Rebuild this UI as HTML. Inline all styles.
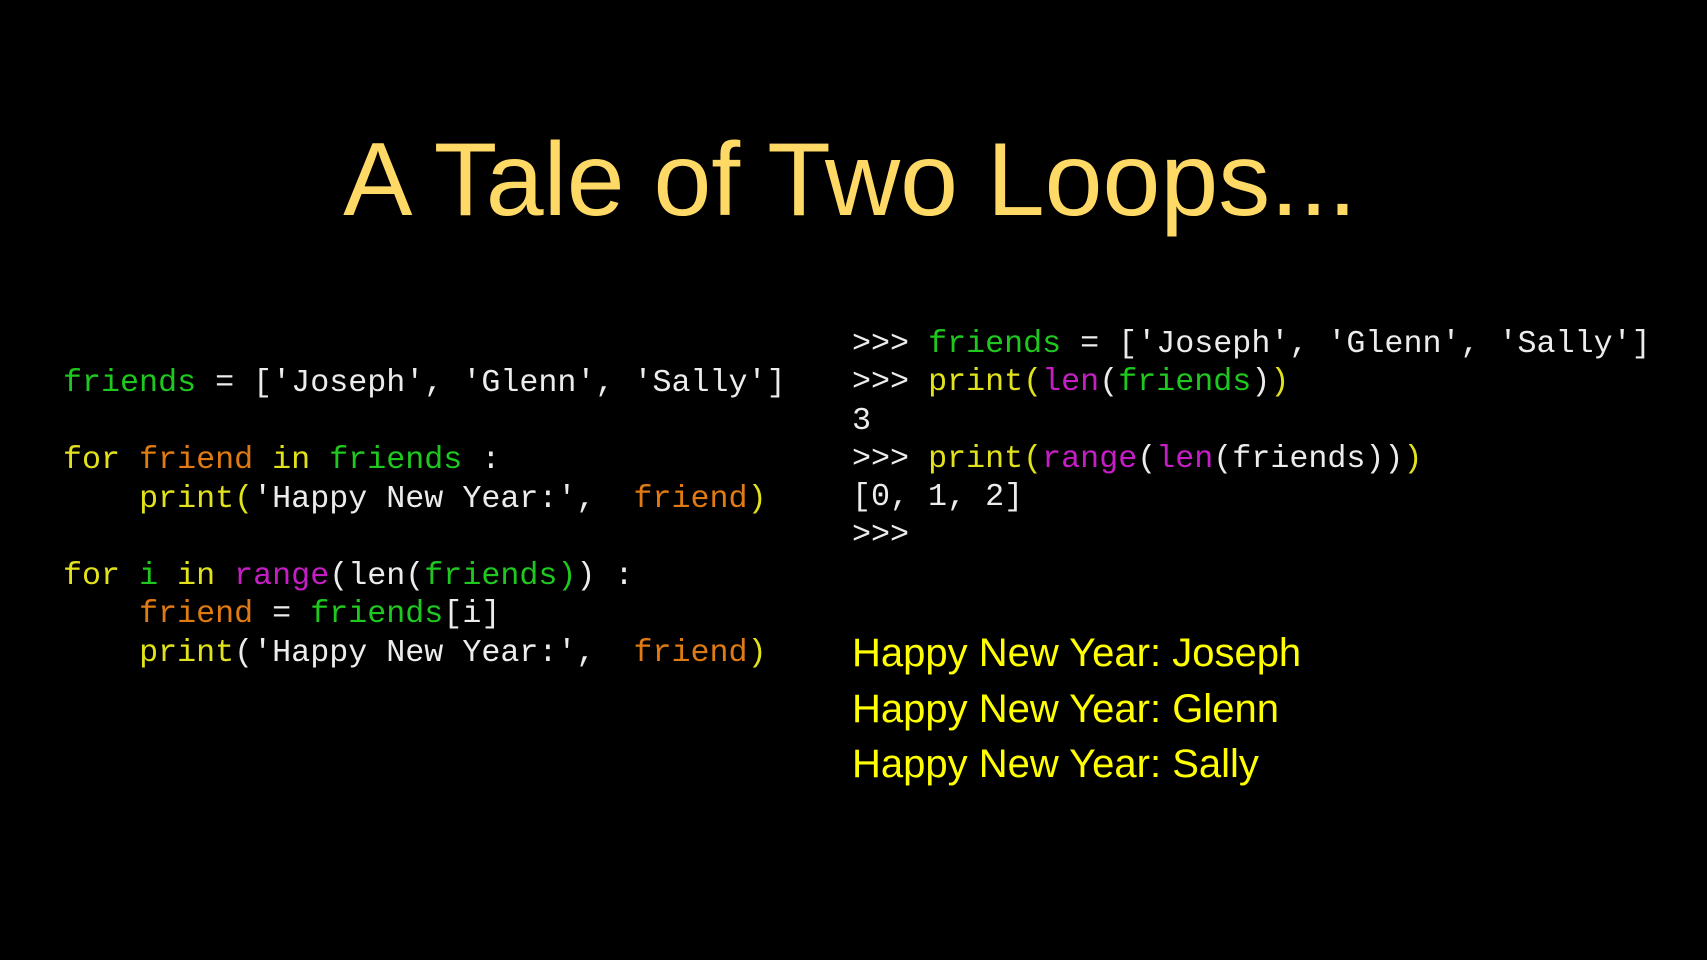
<!DOCTYPE html>
<html><head><meta charset="utf-8"><style>
html,body{margin:0;padding:0;background:#000;width:1707px;height:960px;overflow:hidden}
.t{position:absolute;left:0;width:1700px;text-align:center;top:128px;font:104px/104px "Liberation Sans",sans-serif;color:#ffd966}
.code{position:absolute;font:31.7px/38.5px "Liberation Mono",monospace;color:#ececec;white-space:pre}
.g{color:#1ec81e}.o{color:#e07a12}.y{color:#e2e21c}.m{color:#c41ec4}
.h{position:absolute;left:852px;top:626px;font:40px/55.6px "Liberation Sans",sans-serif;color:#ffff00}
</style></head><body>
<div class="t">A Tale of Two Loops...</div>
<div class="code" style="left:63px;top:364px"><span class="g">friends</span> = ['Joseph', 'Glenn', 'Sally']

<span class="y">for</span> <span class="o">friend</span> <span class="y">in</span> <span class="g">friends</span> :
    <span class="y">print(</span>'Happy New Year:',  <span class="o">friend</span><span class="y">)</span>

<span class="y">for</span> <span class="g">i</span> <span class="y">in</span> <span class="m">range</span>(len(<span class="g">friends)</span>) :
    <span class="o">friend</span> = <span class="g">friends</span>[i]
    <span class="y">print</span>('Happy New Year:',  <span class="o">friend</span><span class="y">)</span></div>
<div class="code" style="left:852px;top:325px;line-height:38.3px">&gt;&gt;&gt; <span class="g">friends</span> = ['Joseph', 'Glenn', 'Sally']
&gt;&gt;&gt; <span class="y">print(</span><span class="m">len</span>(<span class="g">friends</span>)<span class="y">)</span>
3
&gt;&gt;&gt; <span class="y">print(</span><span class="m">range</span>(<span class="m">len</span>(friends))<span class="y">)</span>
[0, 1, 2]
&gt;&gt;&gt;</div>
<div class="h">Happy New Year: Joseph<br>Happy New Year: Glenn<br>Happy New Year: Sally</div>
</body></html>
